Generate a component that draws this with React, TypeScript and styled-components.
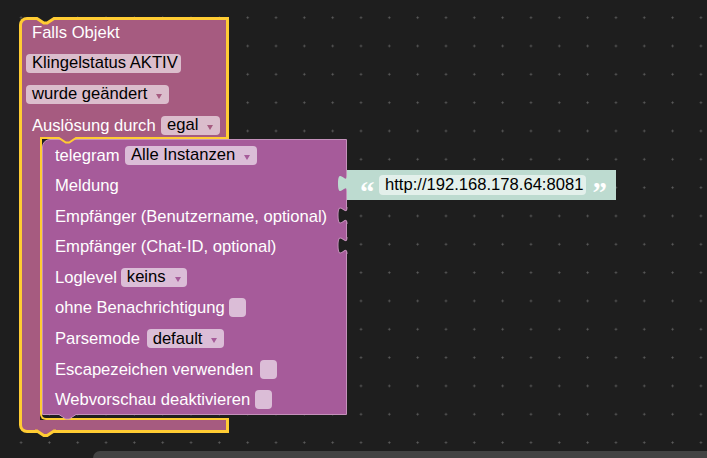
import styled, { createGlobalStyle } from "styled-components";

const BG = "#1e1e1e";
const OUTER = "#a65b80";
const INNER = "#a65b9a";
const INNER_EDGE = "#c591bb";
const SELECT = "#fc3";
const MINT = "#bddbd0";

const GlobalStyle = createGlobalStyle`
  html, body { margin: 0; padding: 0; background: ${BG}; }
  body { font-family: "Liberation Sans", Arial, sans-serif; }
`;

const Workspace = styled.div`
  position: relative;
  width: 707px;
  height: 458px;
  overflow: hidden;
  background-color: ${BG};
  background-image: radial-gradient(circle, #5e5e5e 0.8px, transparent 1.3px);
  background-size: 28.33px 28.33px;
  background-position: 6.9px 3.5px;
`;

const EventBlock = styled.div`
  position: absolute;
  left: 19px;
  top: 17px;
  width: 210px;
  display: flex;
  flex-direction: column;
`;

const Head = styled.div`
  box-sizing: border-box;
  height: 120px;
  background: ${OUTER};
  border: 3px solid ${SELECT};
  border-bottom: none;
  border-top-left-radius: 8px;
  padding: 2.5px 0 0 4px;
  display: flex;
  flex-direction: column;
  gap: 12px;
`;

const StatementRow = styled.div`
  display: flex;
  height: 283px;
`;

const Arm = styled.div`
  flex: none;
  box-sizing: border-box;
  width: 21px;
  background: ${OUTER};
  border-left: 3px solid ${SELECT};
`;

const Slot = styled.div`
  flex: 1;
  min-width: 0;
  box-sizing: border-box;
  border: 2px solid ${SELECT};
  border-right: none;
  border-bottom-left-radius: 6px;
  padding-bottom: 3px;
`;

const Foot = styled.div`
  box-sizing: border-box;
  height: 12.5px;
  background: ${OUTER};
  border: 3px solid ${SELECT};
  border-top: none;
  border-bottom-left-radius: 8px;
`;

const InnerBlock = styled.div`
  position: relative;
  box-sizing: border-box;
  width: 305px;
  height: 276px;
  background: ${INNER};
  border: 1px solid ${INNER_EDGE};
  border-top-left-radius: 8px;
  padding: 5.5px 0 0 6px;
  display: flex;
  flex-direction: column;
  gap: 11.6px;
`;

const Row = styled.div<{ $gap?: number }>`
  position: relative;
  display: flex;
  align-items: center;
  height: 19px;
  gap: ${(p) => p.$gap ?? 5}px;
`;

const Label = styled.span`
  margin-left: 6px;
  color: #fff;
  font-size: 16.6px;
  line-height: 19px;
  white-space: nowrap;
`;

const Field = styled.span<{ $bg: string; $right?: number }>`
  display: flex;
  align-items: center;
  box-sizing: border-box;
  height: 19px;
  padding: 0 ${(p) => p.$right ?? 6.5}px 0 6px;
  border-radius: 4px;
  background: ${(p) => p.$bg};
  color: #000;
  font-size: 16.6px;
  white-space: nowrap;
`;

const Arrow = styled.span<{ $color: string }>`
  width: 0;
  height: 0;
  margin: 4px 0 0 9px;
  border-left: 3.5px solid transparent;
  border-right: 3.5px solid transparent;
  border-top: 5px solid ${(p) => p.$color};
`;

const Checkbox = styled.span<{ $bg: string }>`
  width: 17px;
  height: 19px;
  border-radius: 4px;
  background: ${(p) => p.$bg};
`;

const TabSvg = styled.svg<{ $left?: number; $top: number }>`
  position: absolute;
  top: ${(p) => p.$top}px;
  ${(p) => (p.$left !== undefined ? `left: ${p.$left}px;` : "right: -1px;")}
  overflow: visible;
`;

const NotchSvg = styled.svg<{ $left: number; $top: number }>`
  position: absolute;
  left: ${(p) => p.$left}px;
  top: ${(p) => p.$top}px;
  overflow: visible;
`;

const StringBlock = styled.div`
  position: absolute;
  left: 347px;
  top: 170px;
  box-sizing: border-box;
  width: 269px;
  height: 29.5px;
  background: ${MINT};
  display: flex;
  align-items: flex-start;
  padding: 5px 0 0 13px;
`;

const Quote = styled.span<{ $gap: number }>`
  flex: none;
  width: 14px;
  height: 20px;
  margin-left: ${(p) => p.$gap}px;
  color: #fff;
  font-family: "Liberation Serif", serif;
  font-weight: bold;
  font-size: 29px;
  line-height: 29px;
  margin-top: 3px;
  letter-spacing: -1px;
`;

const TextField = styled.span`
  display: flex;
  align-items: center;
  box-sizing: border-box;
  height: 20px;
  margin-left: 5px;
  padding: 0 3px 0 6px;
  border-radius: 4px;
  background: #e3f0eb;
  color: #000;
  font-size: 16.6px;
  white-space: nowrap;
`;

const Scrollbar = styled.div`
  position: absolute;
  left: 93px;
  top: 451px;
  width: 640px;
  height: 14px;
  border-radius: 7px;
  background: #434343;
`;

const TAB_CURVE = "M8,0 c0,10 -8,-8 -8,7.5 s8,-2.5 8,7.5";

const Tab = ({ fill, edge, left, top }: { fill: string; edge?: string; left?: number; top: number }) => (
  <TabSvg width="9" height="17" viewBox="0 0 8 15" preserveAspectRatio="none" $left={left} $top={top}>
    <path d={TAB_CURVE + " Z"} fill={fill} />
    {edge && <path d={TAB_CURVE} fill="none" stroke={edge} strokeWidth="0.9" />}
  </TabSvg>
);

const OUTER_FIELD = "#dbbdcc";
const INNER_FIELD = "#dbbdd7";

export default function App() {
  return (
    <Workspace>
      <GlobalStyle />
      <EventBlock>
        <Head>
          <Row>
            <Label>Falls Objekt</Label>
          </Row>
          <Row>
            <Field $bg={OUTER_FIELD} $right={3.5}>
              Klingelstatus AKTIV
            </Field>
          </Row>
          <Row>
            <Field $bg={OUTER_FIELD}>
              wurde geändert
              <Arrow $color={OUTER} />
            </Field>
          </Row>
          <Row $gap={5.4}>
            <Label>Auslösung durch</Label>
            <Field $bg={OUTER_FIELD}>
              egal
              <Arrow $color={OUTER} />
            </Field>
          </Row>
        </Head>
        <StatementRow>
          <Arm />
          <Slot>
            <InnerBlock>
              <Row $gap={5.4}>
                <Label>telegram</Label>
                <Field $bg={INNER_FIELD}>
                  Alle Instanzen
                  <Arrow $color={INNER} />
                </Field>
              </Row>
              <Row>
                <Label>Meldung</Label>
              </Row>
              <Row>
                <Label>Empfänger (Benutzername, optional)</Label>
                <Tab fill={BG} edge={INNER_EDGE} top={0} />
              </Row>
              <Row>
                <Label>Empfänger (Chat-ID, optional)</Label>
                <Tab fill={BG} edge={INNER_EDGE} top={0} />
              </Row>
              <Row $gap={4}>
                <Label>Loglevel</Label>
                <Field $bg={INNER_FIELD}>
                  keins
                  <Arrow $color={INNER} />
                </Field>
              </Row>
              <Row $gap={4.5}>
                <Label>ohne Benachrichtigung</Label>
                <Checkbox $bg={INNER_FIELD} />
              </Row>
              <Row $gap={6.8}>
                <Label>Parsemode</Label>
                <Field $bg={INNER_FIELD}>
                  default
                  <Arrow $color={INNER} />
                </Field>
              </Row>
              <Row $gap={6.6}>
                <Label>Escapezeichen verwenden</Label>
                <Checkbox $bg={INNER_FIELD} />
              </Row>
              <Row $gap={5}>
                <Label>Webvorschau deaktivieren</Label>
                <Checkbox $bg={INNER_FIELD} />
              </Row>
              {/* next-connection tab under the telegram block */}
              <NotchSvg $left={14} $top={273} width="21" height="9">
                <polygon points="2,0 19,0 19,1.5 12.2,6 8.8,6 2,1.5" fill={INNER} />
                <polyline points="2,1.5 8.8,6 12.2,6 19,1.5" fill="none" stroke={INNER_EDGE} strokeWidth="1" />
              </NotchSvg>
            </InnerBlock>
          </Slot>
        </StatementRow>
        <Foot />
        {/* previous-connection notch on top */}
        <NotchSvg $left={16} $top={-1} width="21" height="10">
          <polygon points="2,0 19,0 19,2.5 12.2,7 8.8,7 2,2.5" fill={BG} />
          <polyline points="0,2.5 2,2.5 8.8,7 12.2,7 19,2.5 21,2.5" fill="none" stroke={SELECT} strokeWidth="3" />
        </NotchSvg>
        {/* statement connection tab inside the C */}
        <NotchSvg $left={38} $top={118} width="21" height="11">
          <polygon points="2,2 19,2 19,3 12.2,7.5 8.8,7.5 2,3" fill={OUTER} />
          <polyline points="0,3 2,3 8.8,7.5 12.2,7.5 19,3 21,3" fill="none" stroke={SELECT} strokeWidth="2" />
        </NotchSvg>
        {/* next-connection tab at the bottom */}
        <NotchSvg $left={16} $top={411} width="21" height="11">
          <polygon points="2,1.5 19,1.5 19,3 12.2,7.5 8.8,7.5 2,3" fill={OUTER} />
          <polyline points="0,3 2,3 8.8,7.5 12.2,7.5 19,3 21,3" fill="none" stroke={SELECT} strokeWidth="3" />
        </NotchSvg>
      </EventBlock>
      <StringBlock>
        <Tab fill={MINT} left={-9} top={5} />
        <Quote $gap={0}>“</Quote>
        <TextField>http://192.168.178.64:8081</TextField>
        <Quote $gap={6}>”</Quote>
      </StringBlock>
      <Scrollbar />
    </Workspace>
  );
}
